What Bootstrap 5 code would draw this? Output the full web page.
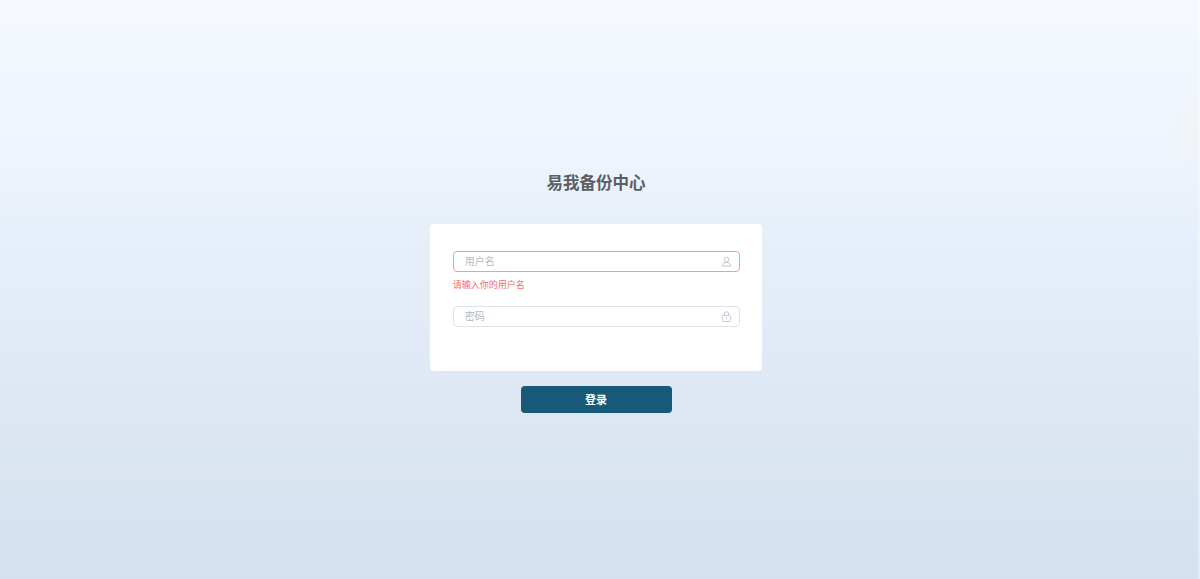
<!DOCTYPE html>
<html lang="zh-CN">
<head>
<meta charset="utf-8">
<title>易我备份中心</title>
<link href="https://cdn.jsdelivr.net/npm/bootstrap@5.3.0/dist/css/bootstrap.min.css" rel="stylesheet">
<style>
html,body{height:100%;overflow:hidden}
body{background:linear-gradient(90deg,transparent 1198px,rgba(255,255,255,.35) 1198px),radial-gradient(ellipse 32px 42px at 1200px 135px,rgba(245,240,238,.6),rgba(245,240,238,0)),linear-gradient(180deg,#f5f9ff 0%,#eef5fd 25%,#e7effa 40%,#dde7f3 70%,#d5e1f0 100%);font-family:"Liberation Sans","Noto Sans CJK SC",sans-serif;font-size:10px;padding:172px 8px 0 0}
.login-title{font-size:16.5px;line-height:23px;font-weight:700;color:#5a5f65;margin:0 0 29px}
.login-panel{width:332.500px;height:147px;padding:27px 22px 0 23px;border-radius:4px;background:#fff;margin-bottom:15px}
.login-field{height:21px;border:1px solid #dfe2e8;border-radius:4px;padding:0 7px 0 11px;background:#fff}
.login-field.is-bad{border-color:#f99a9a}
.login-field input{border:0;outline:0;background:transparent;font-size:10px;line-height:19px;padding:0;flex:1;min-width:0;color:#555}
.login-field input::placeholder{color:#b4b9c2;opacity:1}
.login-field svg{width:11px;height:11px;flex:none}
.login-msg{height:33.500px;padding-top:6px;line-height:14px;font-size:9px;color:#f56c6c}
.login-btn{width:151px;height:27px;padding:1px 0 0;border:0;border-radius:4px;background:#175a78;color:#fff;font-size:11px;font-weight:700}
.login-btn:hover{background:#175a78;color:#fff}
</style>
</head>
<body class="d-flex flex-column align-items-center">
<h1 class="login-title">易我备份中心</h1>
<form class="login-panel">
  <div class="login-field is-bad d-flex align-items-center">
    <input type="text" placeholder="用户名">
    <svg viewBox="0 0 12 12" fill="none" stroke="#bcc1c9" stroke-width="1"><circle cx="6" cy="3.800" r="2.600"/><path d="M1.500 11c0-2.600 1.600-4 4.500-4s4.500 1.400 4.500 4z"/></svg>
  </div>
  <div class="login-msg">请输入你的用户名</div>
  <div class="login-field d-flex align-items-center">
    <input type="password" placeholder="密码">
    <svg viewBox="0 0 12 12" fill="none" stroke="#bcc1c9" stroke-width="1"><rect x="1.500" y="4.800" width="9" height="6.700" rx="1.300"/><path d="M3.500 4.800V3.300a2.500 2.500 0 0 1 5 0v1.500M6 7.200v1.800"/></svg>
  </div>
</form>
<button type="button" class="btn login-btn">登录</button>
<script src="https://cdn.jsdelivr.net/npm/bootstrap@5.3.0/dist/js/bootstrap.bundle.min.js"></script>
</body>
</html>
